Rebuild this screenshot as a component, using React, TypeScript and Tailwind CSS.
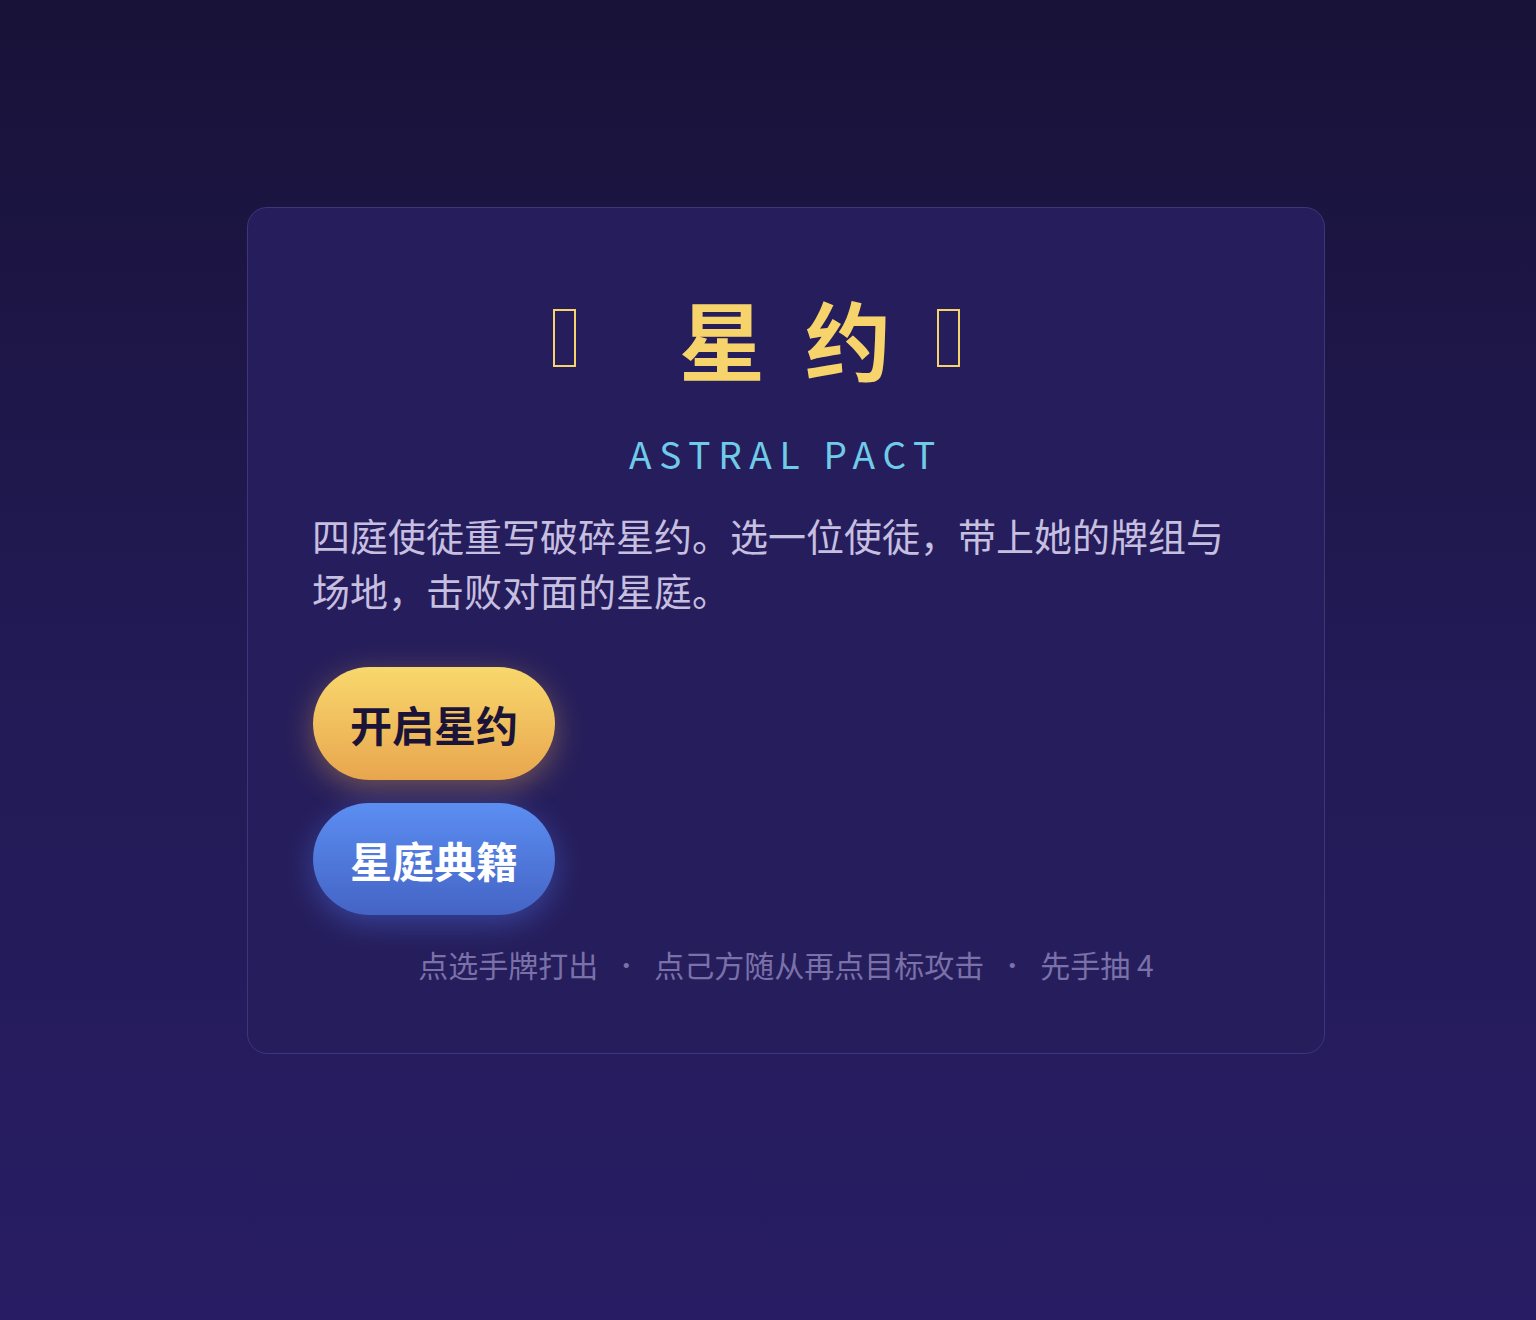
import React from "react";

const CJK = '"Noto Sans CJK SC", "Noto Sans", sans-serif';

function Tofu() {
  return <span className="inline-block h-[58px] w-[23px] shrink-0 border-2 border-[#f5d26a]" />;
}

export default function App() {
  return (
    <div
      className="min-h-[1320px] w-full bg-gradient-to-b from-[#181238] via-[#221a55] to-[#281d64] pt-[207px] pl-[36px] flex justify-center items-start"
      style={{ fontFamily: CJK }}
    >
      <div className="w-[1078px] rounded-[20px] border border-[#3e357a] bg-[#261e5c] px-16 pt-16 pb-[66px] flex flex-col">
        {/* Title */}
        <div className="flex items-center justify-center pt-[6px] leading-[1.4] text-[86px] font-bold text-[#f7d46b]">
          <Tofu />
          <span className="ml-[103px]">星</span>
          <span className="ml-[40px]">约</span>
          <span className="ml-[46px] mr-[59px] flex items-center">
            <Tofu />
          </span>
        </div>

        {/* Subtitle */}
        <div className="mt-[31px] text-center text-[37px] leading-[48px] tracking-[0.21em] text-[#6fcbe8]">
          ASTRAL PACT
        </div>

        {/* Description */}
        <p className="mt-[30px] text-[38px] leading-[55px] text-[#c6bfe0]">
          四庭使徒重写破碎星约。选一位使徒，带上她的牌组与场地，击败对面的星庭。
        </p>

        {/* Buttons */}
        <div className="mt-[50px] flex flex-col items-start gap-[23px]">
          <button className="ml-px h-[113px] w-[242px] rounded-full bg-gradient-to-b from-[#f8d86d] to-[#e8a64e] text-[42px] font-bold text-[#1b1338] shadow-[0_8px_30px_rgba(240,175,80,0.38)]">
            开启星约
          </button>
          <button className="ml-px h-[112px] w-[242px] rounded-full bg-gradient-to-b from-[#5c8ef2] to-[#4464c5] text-[42px] font-bold text-white shadow-[0_8px_30px_rgba(80,120,240,0.42)]">
            星庭典籍
          </button>
        </div>

        {/* Footer */}
        <div className="mt-[26px] flex justify-center">
          <div className="inline-flex items-center gap-[16px] whitespace-nowrap text-[30px] leading-[46px] text-[#7b71a9]">
            <span>点选手牌打出</span>
            <span className="text-[24px]">•</span>
            <span>点己方随从再点目标攻击</span>
            <span className="text-[24px]">•</span>
            <span>先手抽 4</span>
          </div>
        </div>
      </div>
    </div>
  );
}
